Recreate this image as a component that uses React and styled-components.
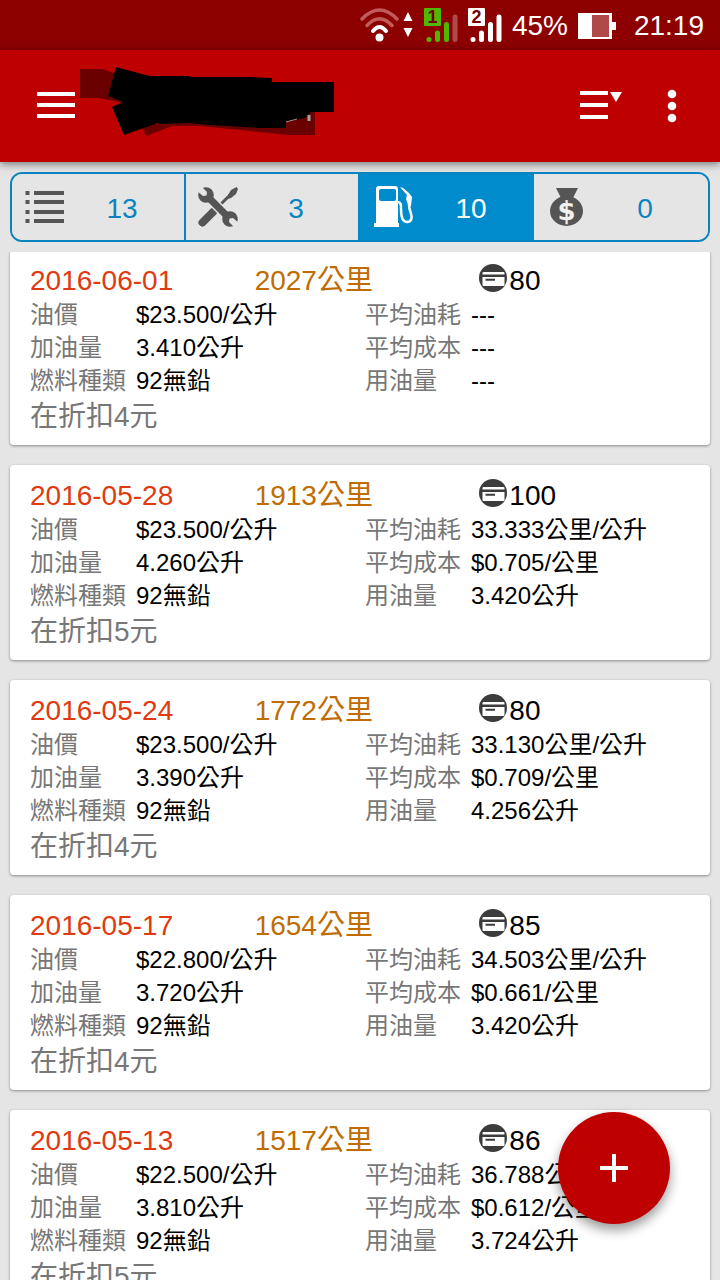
import React, { useState } from 'react';
import styled, { createGlobalStyle } from 'styled-components';

const FONT = "'Liberation Sans', 'Noto Sans CJK TC', sans-serif";

const records = [
  {
    date: '2016-06-01',
    odometer: '2027公里',
    cost: '80',
    price: '$23.500/公升',
    volume: '3.410公升',
    fuel: '92無鉛',
    economy: '---',
    average: '---',
    used: '---',
    note: '在折扣4元',
  },
  {
    date: '2016-05-28',
    odometer: '1913公里',
    cost: '100',
    price: '$23.500/公升',
    volume: '4.260公升',
    fuel: '92無鉛',
    economy: '33.333公里/公升',
    average: '$0.705/公里',
    used: '3.420公升',
    note: '在折扣5元',
  },
  {
    date: '2016-05-24',
    odometer: '1772公里',
    cost: '80',
    price: '$23.500/公升',
    volume: '3.390公升',
    fuel: '92無鉛',
    economy: '33.130公里/公升',
    average: '$0.709/公里',
    used: '4.256公升',
    note: '在折扣4元',
  },
  {
    date: '2016-05-17',
    odometer: '1654公里',
    cost: '85',
    price: '$22.800/公升',
    volume: '3.720公升',
    fuel: '92無鉛',
    economy: '34.503公里/公升',
    average: '$0.661/公里',
    used: '3.420公升',
    note: '在折扣4元',
  },
  {
    date: '2016-05-13',
    odometer: '1517公里',
    cost: '86',
    price: '$22.500/公升',
    volume: '3.810公升',
    fuel: '92無鉛',
    economy: '36.788公里/公升',
    average: '$0.612/公里',
    used: '3.724公升',
    note: '在折扣5元',
  },
];

const WifiIcon = () => (
  <svg width="54" height="36" viewBox="0 0 54 36" aria-hidden="true">
    <g fill="none" strokeWidth="3.500" strokeLinecap="round">
      <path d="M2 11 Q19.500 -7 37 11" stroke="#c05c5c" />
      <path d="M7 17.500 Q19.500 4 32 17.500" stroke="#c05c5c" />
      <path d="M13 23 Q19.500 15 26 23" stroke="#fff" strokeWidth="4" />
    </g>
    <circle cx="19.500" cy="29.500" r="4" fill="#fff" />
    <path d="M48 4 L52.500 13 H43.500 Z M48 29 L52.500 20 H43.500 Z" fill="#fff" />
  </svg>
);

const SignalIcon = ({ sim, color, lastColor }) => (
  <svg width="34" height="36" viewBox="0 0 34 36" aria-hidden="true">
    <rect x="0" y="0" width="17" height="18" rx="1" fill={color} />
    <text x="8.500" y="15" fontSize="18" fontWeight="bold" textAnchor="middle" fill="#700000">
      {sim}
    </text>
    <circle cx="5" cy="31.500" r="2.500" fill={color} />
    <g strokeWidth="5" strokeLinecap="round" stroke={color}>
      <path d="M13.500 25 V31.500" />
      <path d="M22.500 16.500 V31.500" />
      <path d="M31 9 V31.500" stroke={lastColor} />
    </g>
  </svg>
);

const BatteryIcon = () => (
  <svg width="46" height="26" viewBox="0 0 46 26" aria-hidden="true">
    <path d="M0 0 H34 V9 H38 V17 H34 V26 H0 Z" fill="#fff" />
    <rect x="14" y="2" width="17" height="22" fill="#b04a4a" />
  </svg>
);

const MenuIcon = () => (
  <svg width="38" height="28" viewBox="0 0 38 28" aria-hidden="true">
    <path d="M0 0H38V4H0Z M0 11H38V15H0Z M0 22H38V26H0Z" fill="#fff" />
  </svg>
);

const SortIcon = () => (
  <svg width="44" height="30" viewBox="0 0 44 30" aria-hidden="true">
    <path d="M1 0H29V4H1Z M1 12H29V16H1Z M1 24H29V28H1Z M31 1H43L37 11Z" fill="#fff" />
  </svg>
);

const MoreIcon = () => (
  <svg width="10" height="34" viewBox="0 0 10 34" aria-hidden="true">
    <g fill="#fff">
      <circle cx="5" cy="5" r="4.300" />
      <circle cx="5" cy="17" r="4.300" />
      <circle cx="5" cy="29" r="4.300" />
    </g>
  </svg>
);

const ScribbleMark = () => (
  <svg width="254" height="70" viewBox="0 0 254 70" aria-hidden="true">
    <path d="M0 2 H22 L40 8 L44 36 L18 31 H0 Z" fill="#6a0000" />
    <path
      d="M62 60 L66 69 L92 59 H120 L160 63 L208 68 H235 V42 L205 50 L90 54 Z"
      fill="#6a0000"
    />
    <path
      d="M36 0 L62 7 L70 9 H108 L112 10 H170 L192 11 V15 H254 V45 H231 L225 51 L206 55 V61 H180 L130 58 L110 56 L80 57 L78 56 L44 68 L32 40 L43 35 L28 29 Z"
      fill="#000"
    />
    <path d="M206 55 L217 52" stroke="#b58a8a" strokeWidth="1" />
    <path d="M229 48 V54" stroke="#a3a3a3" strokeWidth="3" />
  </svg>
);

const ListIcon = () => (
  <svg width="40" height="40" viewBox="0 0 40 40" aria-hidden="true">
    <g fill="#555">
      {[4, 13, 23, 32].map(y => (
        <path key={y} d={`M1.500 ${y}h4v4h-4Z M10 ${y}h30v4h-30Z`} />
      ))}
    </g>
  </svg>
);

const ToolsIcon = () => (
  <svg width="40" height="40" viewBox="0 0 40 40" aria-hidden="true">
    <path d="M4.500 35.500 L15 25" stroke="#555" strokeWidth="8" strokeLinecap="round" />
    <path d="M22 18 L32 8" stroke="#555" strokeWidth="3" />
    <path d="M30 8 L33 3 L38.500 0 L40 2 L38 7 L33 11 L29.500 12 Z" fill="#555" />
    <path d="M11 11 L29 29" stroke="#e5e5e5" strokeWidth="10" />
    <path d="M10 10 L30 30" stroke="#555" strokeWidth="7" />
    <circle cx="8" cy="8" r="7.800" fill="#555" />
    <circle cx="32" cy="32" r="7.800" fill="#555" />
    <path
      d="M-1 1 L3 -1 L9 5 L8.500 8.500 L5 9 L-1 4 Z M41 39 L37 41 L31 35 L31.500 31.500 L35 31 L41 36 Z"
      fill="#e5e5e5"
    />
  </svg>
);

const PumpIcon = () => (
  <svg width="42" height="42" viewBox="0 0 42 42" aria-hidden="true">
    <path
      fillRule="evenodd"
      d="M4 3 Q4 0 7 0 H23 Q26 0 26 3 V37 H27 V41 H2 V37 H4 Z M9 3 Q7 3 7 5 V13 Q7 15 9 15 H22 Q24 15 24 13 V5 Q24 3 22 3 Z"
      fill="#fff"
    />
    <path
      d="M25 16 C29.500 16 29 20 29 23 C29 32 31 36 35 36 C40 36 40.500 31 38.500 26 C36.500 21 36.500 17 38 12"
      fill="none"
      stroke="#fff"
      strokeWidth="2.500"
    />
    <path d="M28 1 L31 2 L37 7 L40 11 L39 20 L37 21 L34 13 L35 9 Z" fill="#fff" />
  </svg>
);

const MoneyIcon = () => (
  <svg width="40" height="40" viewBox="0 0 40 40" aria-hidden="true">
    <path d="M10 1 H32 L27 11 H15 Z" fill="#555" />
    <ellipse cx="20.500" cy="24" rx="16.500" ry="15" fill="#555" />
    <text
      x="20.500"
      y="33"
      fontFamily="'DejaVu Sans', sans-serif"
      fontSize="26"
      fontWeight="bold"
      textAnchor="middle"
      fill="#f0f0f0"
    >
      $
    </text>
  </svg>
);

const CardIcon = () => (
  <svg width="28" height="28" viewBox="0 0 28 28" role="img" aria-label="費用">
    <circle cx="14" cy="14" r="14" fill="#3c3c3c" />
    <rect x="3.500" y="8" width="22" height="14" rx="1" fill="#fff" />
    <path d="M3 10.500H26V13H3Z M6.500 14.800H16V16.800H6.500Z" fill="#3c3c3c" />
  </svg>
);

const tabs = [
  { id: 'all', label: '全部', count: 13, Icon: ListIcon },
  { id: 'service', label: '保養', count: 3, Icon: ToolsIcon },
  { id: 'fuel', label: '加油', count: 10, Icon: PumpIcon },
  { id: 'expense', label: '費用', count: 0, Icon: MoneyIcon },
];

const RecordCard = ({ record }) => (
  <Card>
    <CardHeader>
      <DateText>{record.date}</DateText>
      <Odometer>{record.odometer}</Odometer>
      <Cost>
        <CardIcon />
        {record.cost}
      </Cost>
    </CardHeader>
    <Details>
      <Label>油價</Label>
      <Value>{record.price}</Value>
      <Label>平均油耗</Label>
      <Value>{record.economy}</Value>
      <Label>加油量</Label>
      <Value>{record.volume}</Value>
      <Label>平均成本</Label>
      <Value>{record.average}</Value>
      <Label>燃料種類</Label>
      <Value>{record.fuel}</Value>
      <Label>用油量</Label>
      <Value>{record.used}</Value>
    </Details>
    <Note>{record.note}</Note>
  </Card>
);

const App = () => {
  const [active, setActive] = useState('fuel');

  return (
    <>
      <GlobalStyle />
      <Screen>
        <StatusBar>
          <WifiIcon />
          <SignalIcon sim="1" color="#4fb800" lastColor="#b04a4a" />
          <SignalIcon sim="2" color="#fff" lastColor="#fff" />
          <span>45%</span>
          <BatteryIcon />
          <span>21:19</span>
        </StatusBar>
        <Toolbar>
          <IconButton aria-label="選單">
            <MenuIcon />
          </IconButton>
          <Title>
            <ScribbleMark />
          </Title>
          <Actions>
            <IconButton aria-label="排序">
              <SortIcon />
            </IconButton>
            <IconButton aria-label="更多">
              <MoreIcon />
            </IconButton>
          </Actions>
        </Toolbar>
        <TabArea>
          <TabBar>
            {tabs.map(({ id, label, count, Icon }) => (
              <Tab
                key={id}
                aria-label={`${label} ${count}`}
                aria-pressed={active === id}
                $active={active === id}
                onClick={() => setActive(id)}
              >
                <Icon />
                <Count>{count}</Count>
              </Tab>
            ))}
          </TabBar>
        </TabArea>
        <List>
          {records.map(record => (
            <RecordCard key={record.date} record={record} />
          ))}
        </List>
        <AddButton aria-label="新增">
          <svg width="28" height="28" viewBox="0 0 28 28" aria-hidden="true">
            <path d="M12 0H16V12H28V16H16V28H12V16H0V12H12Z" fill="#fff" />
          </svg>
        </AddButton>
      </Screen>
    </>
  );
};

const GlobalStyle = createGlobalStyle`
  * {
    box-sizing: border-box;
  }

  body {
    margin: 0;
    background: #e5e5e5;
    font-family: ${FONT};
  }

  button {
    font-family: inherit;
    cursor: pointer;
  }

  svg {
    display: block;
    flex-shrink: 0;
  }
`;

const Screen = styled.div`
  height: 100vh;
  display: flex;
  flex-direction: column;
  overflow: hidden;
`;

const StatusBar = styled.div`
  display: flex;
  align-items: center;
  justify-content: flex-end;
  gap: 10px;
  height: 50px;
  flex-shrink: 0;
  padding: 2px 16px 0;
  background: #8c0000;
  color: #fff;
  font-size: 28px;
  line-height: 36px;
`;

const Toolbar = styled.header`
  display: flex;
  align-items: center;
  gap: 5px;
  height: 112px;
  flex-shrink: 0;
  padding: 0 43px 0 37px;
  background: #bf0000;
  box-shadow: 0 2px 8px rgba(0, 0, 0, 0.5);
  z-index: 2;
`;

const IconButton = styled.button`
  padding: 0;
  border: 0;
  background: none;
`;

const Title = styled.div`
  flex: 1;
  padding-bottom: 8px;
`;

const Actions = styled.div`
  display: flex;
  align-items: center;
  gap: 44px;
`;

const TabArea = styled.div`
  flex-shrink: 0;
  padding: 10px;
  background: #e5e5e5;
  z-index: 1;
`;

const TabBar = styled.nav`
  display: grid;
  grid-template-columns: repeat(4, 1fr);
  height: 70px;
  border: 2px solid #0a84c0;
  border-radius: 12px;
  overflow: hidden;
`;

const Tab = styled.button`
  display: flex;
  align-items: center;
  padding: 0 4px 0 12px;
  border: 0;
  border-right: 2px solid #0a84c0;
  background: ${({ $active }) => ($active ? '#008ccc' : '#e5e5e5')};
  border-color: ${({ $active }) => ($active ? '#008ccc' : '#0a84c0')};
  color: ${({ $active }) => ($active ? '#fff' : '#0a84c0')};

  &:last-child {
    border-right: 0;
  }
`;

const Count = styled.span`
  flex: 1;
  padding-top: 4px;
  text-align: center;
  font-size: 28px;
  line-height: 36px;
`;

/* the first card tucks slightly under the tab area */
const List = styled.main`
  flex: 1;
  min-height: 0;
  display: flex;
  flex-direction: column;
  gap: 20px;
  margin-top: -2px;
  padding: 0 10px 20px;
  overflow-y: auto;
  scrollbar-width: none;
`;

const Card = styled.article`
  flex-shrink: 0;
  padding: 14px 6px 8px 20px;
  background: #fff;
  border-radius: 4px;
  box-shadow: 0 1px 3px rgba(0, 0, 0, 0.4);
`;

const CardHeader = styled.div`
  display: grid;
  grid-template-columns: repeat(3, 1fr);
  font-size: 28px;
  line-height: 34px;
`;

const DateText = styled.span`
  color: #e03a10;
`;

const Odometer = styled.span`
  color: #c06c00;
`;

const Cost = styled.span`
  display: flex;
  align-items: flex-start;
  gap: 2px;
  color: #000;
`;

const Details = styled.dl`
  display: grid;
  grid-template-columns: 106px 1fr 106px 1fr;
  margin: 0;
  padding-right: 4px;
  font-size: 24px;
  line-height: 33px;
  white-space: nowrap;
`;

const Label = styled.dt`
  color: #777;
`;

const Value = styled.dd`
  margin: 0;
  color: #000;
`;

const Note = styled.div`
  color: #777;
  font-size: 28px;
  line-height: 40px;
`;

const AddButton = styled.button`
  position: fixed;
  right: 50px;
  bottom: 56px;
  z-index: 3;
  display: flex;
  align-items: center;
  justify-content: center;
  width: 112px;
  height: 112px;
  padding: 0;
  border: 0;
  border-radius: 50%;
  background: #bf0000;
  box-shadow: 0 6px 12px rgba(0, 0, 0, 0.4);
`;

export default App;
